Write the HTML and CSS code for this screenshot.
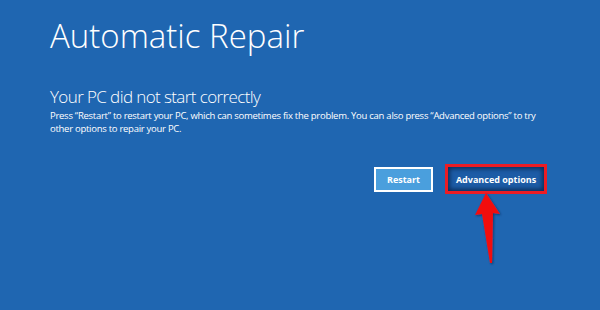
FILE: index.html
```html
<!DOCTYPE html>
<html lang="en">
<head>
    <meta charset="UTF-8">
    <title>Automatic Repair</title>
    <link rel="stylesheet" href="styles.css">
</head>
<body>

<div class="screen">
    <h1 class="title">Automatic Repair</h1>

    <div class="message">
        <h2>Your PC did not start correctly</h2>
        <p>Press “Restart” to restart your PC, which can sometimes fix the problem. You can also press “Advanced options” to try other options to repair your PC.</p>
    </div>

    <div class="actions">
        <button class="btn btn-restart">Restart</button>
        <div class="highlight">
            <button class="btn btn-advanced">Advanced options</button>
        </div>
    </div>

    <!-- annotation arrow pointing at the highlighted button -->
    <svg class="arrow" width="40" height="80" viewBox="0 0 40 80">
        <defs>
            <filter id="shade" x="-50%" y="-50%" width="200%" height="200%">
                <feDropShadow dx="1" dy="1" stdDeviation="1.2" flood-color="#0a2a55" flood-opacity="0.8"/>
            </filter>
        </defs>
        <path d="M17 2 L31 23 L24 22 L23 72 L21 72 L13 23 L6 24 Z" fill="#f20d0d" filter="url(#shade)"/>
    </svg>
</div>

</body>
</html>
```

FILE: styles.css
```css
html, body {
    margin: 0;
    height: 100%;
}
body {
    background-color: #1f66b1;
    color: #fff;
    font-family: "Open Sans", "Noto Sans", sans-serif;
    overflow: hidden;
}
.screen {
    position: relative;
    padding: 14px 53px 0 50px;
}
.title {
    margin: 0;
    font-size: 33px;
    font-weight: 300;
    line-height: 44px;
}
.message {
    margin-top: 27px;
}
.message h2 {
    margin: 0;
    font-size: 17px;
    font-weight: 300;
    letter-spacing: -0.6px;
    line-height: 24px;
}
.message p {
    margin: 0;
    font-size: 9.5px;
    letter-spacing: -0.27px;
    line-height: 13px;
    max-width: 500px;
}
.actions {
    display: flex;
    justify-content: flex-end;
    align-items: center;
    gap: 12px;
    margin-top: 29px;
}
.btn {
    font-family: inherit;
    font-size: 9px;
    font-weight: 700;
    color: #fff;
    white-space: nowrap;
    cursor: pointer;
}
.btn-restart {
    width: 59px;
    height: 25px;
    background-color: #4a9fdd;
    border: 2px solid #fff;
    padding: 0;
}
.highlight {
    border: 3px solid #ec1c24;
    padding: 0;
}
.btn-advanced {
    display: block;
    width: 96px;
    height: 24px;
    padding: 0;
    background-color: #1d5ca6;
    border: none;
    box-shadow: 0 0 4px 2px #0b2f5e inset;
}
.arrow {
    position: absolute;
    left: 469px;
    top: 191px;
}
```
